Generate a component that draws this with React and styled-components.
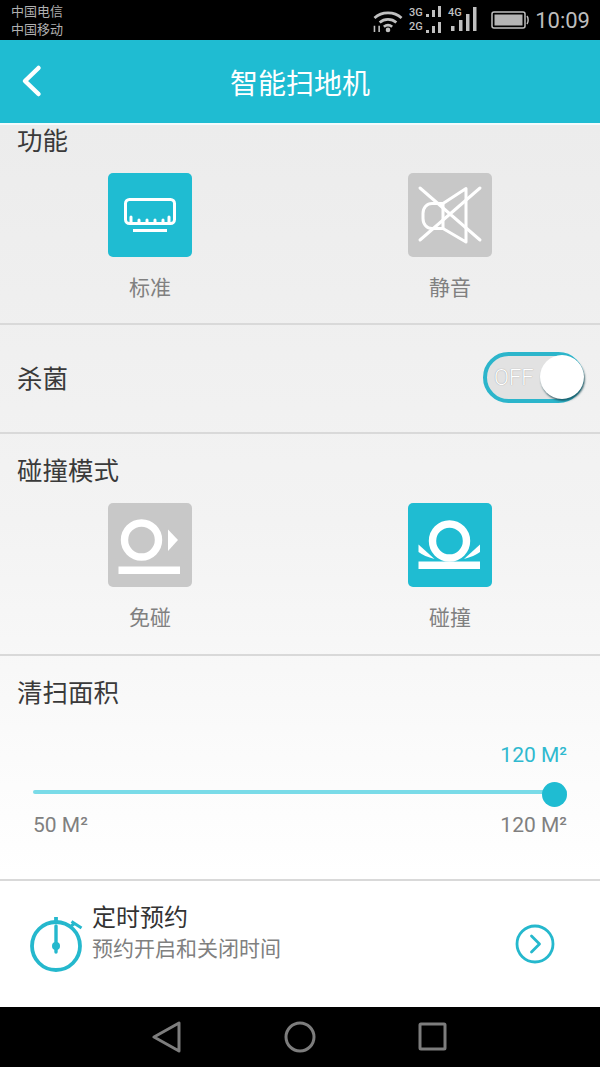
import React from 'react';
import styled, { createGlobalStyle } from 'styled-components';

const TEAL = '#1fbcd2';
const CJK = '"Roboto", "Noto Sans CJK SC", sans-serif';

const GlobalStyle = createGlobalStyle`
    html, body {
        margin: 0;
        padding: 0;
        background: #000;
    }
    body {
        font-family: ${CJK};
    }
`;

const Screen = styled.div`
    width: 600px;
    height: 1067px;
    display: flex;
    flex-direction: column;
    overflow: hidden;
    background: #000;
`;

const StatusBar = styled.div`
    height: 40px;
    flex: none;
    display: flex;
    align-items: center;
    justify-content: space-between;
    padding: 0 10px 0 11px;
    background: #000;
`;

const Carriers = styled.div`
    font-size: 13px;
    line-height: 18px;
    color: #b0b0b0;
    padding-top: 2px;
`;

const StatusRight = styled.div`
    display: flex;
    align-items: center;
`;

const Clock = styled.span`
    font-size: 22px;
    color: #bdbdbd;
    margin-left: 6px;
`;

const TitleBar = styled.div`
    height: 83px;
    flex: none;
    display: flex;
    align-items: center;
    justify-content: center;
    position: relative;
    background: ${TEAL};
    color: #fff;
    font-size: 28px;
`;

const BackIcon = styled.svg`
    position: absolute;
    left: 20px;
    top: 23px;
`;

const Body = styled.div`
    flex: 1;
    display: flex;
    flex-direction: column;
    background: linear-gradient(180deg, #ececec 0%, #f3f3f3 45%, #ffffff 85%);
    border-top: 2px solid #f4fbfc;
`;

const Section = styled.section`
    height: ${p => p.$height}px;
    flex: none;
    box-sizing: border-box;
    border-bottom: 2px solid #d9d9d9;
    padding: ${p => p.$top}px 17px 0;
`;

const SectionTitle = styled.div`
    font-size: 25.5px;
    line-height: 30px;
    color: #3a3a3a;
`;

const Choices = styled.div`
    display: grid;
    grid-template-columns: 1fr 1fr;
    margin: ${p => p.$gap}px -17px 0;
`;

const Choice = styled.div`
    display: flex;
    flex-direction: column;
    align-items: center;
`;

const Tile = styled.div`
    width: 84px;
    height: 84px;
    border-radius: 5px;
    background: ${p => (p.$active ? TEAL : '#c8c8c8')};
    svg {
        display: block;
    }
`;

const ChoiceLabel = styled.div`
    margin-top: 16px;
    font-size: 21px;
    line-height: 30px;
    color: #808080;
`;

const SwitchRow = styled(Section)`
    display: flex;
    align-items: center;
    justify-content: space-between;
    padding: 0 16px 0 17px;
`;

const Toggle = styled.div`
    width: 101px;
    height: 51px;
    margin-top: -3px;
    box-sizing: border-box;
    border: 4px solid #2cb5cb;
    border-radius: 26px;
    background: #e2e2e2;
    display: flex;
    align-items: center;
    justify-content: space-between;
    padding-left: 7px;
`;

const ToggleText = styled.span`
    font-size: 22px;
    font-weight: 300;
    color: #fff;
    text-shadow: 0 0 1px #8a8a8a;
`;

const ToggleKnob = styled.span`
    width: 44px;
    height: 44px;
    margin-right: -4px;
    border-radius: 50%;
    background: #fff;
    box-shadow: 1px 2px 2px rgba(20, 70, 80, 0.75);
`;

const SliderBlock = styled.div`
    margin: 32px 16px 0 16px;
`;

const SliderValue = styled.div`
    text-align: right;
    font-size: 21px;
    line-height: 30px;
    color: #2fb9cf;
`;

const SliderTrack = styled.div`
    position: relative;
    height: 4px;
    margin-top: 20px;
    background: #7adbe8;
    border-radius: 2px;
`;

const SliderThumb = styled.span`
    position: absolute;
    right: 0;
    top: -8px;
    width: 25px;
    height: 25px;
    border-radius: 50%;
    background: ${TEAL};
`;

const SliderLabels = styled.div`
    display: flex;
    justify-content: space-between;
    margin-top: 16px;
    font-size: 21px;
    line-height: 30px;
    color: #808080;
`;

const ScheduleRow = styled.div`
    flex: 1;
    display: flex;
    align-items: center;
    padding: 0 45px 0 26px;
`;

const ScheduleText = styled.div`
    flex: 1;
    margin: -24px 0 0 6px;
`;

const ScheduleTitle = styled.div`
    font-size: 24px;
    line-height: 34px;
    color: #333;
`;

const ScheduleSub = styled.div`
    font-size: 21px;
    line-height: 28px;
    color: #808080;
`;

const NavBar = styled.div`
    height: 60px;
    flex: none;
    display: grid;
    grid-template-columns: repeat(3, 133px);
    justify-content: center;
    justify-items: center;
    align-items: center;
    background: #000;
`;

function WifiIcon() {
    return (
        <svg width="34" height="25" viewBox="0 0 32 24" fill="none" stroke="#c0c0c0" strokeWidth="2.600">
            <path d="M3 9.500c7-6.500 19-6.500 26 0" />
            <path d="M8 14c4.500-4 11.500-4 16 0" />
            <path d="M12 18c2.500-2 5.500-2 8 0" />
            <circle cx="16" cy="21" r="2.200" fill="#c0c0c0" stroke="none" />
            <path d="M3 17v6M7.500 17v6" strokeWidth="1.500" />
        </svg>
    );
}

function SignalIcon() {
    return (
        <svg width="36" height="30" viewBox="0 0 36 30" style={{ marginLeft: 4 }}>
            <g fill="#c0c0c0" fontFamily="Roboto, sans-serif" fontSize="11" fontWeight="500">
                <text x="0" y="11">3G</text>
                <text x="0" y="25">2G</text>
                <rect x="17" y="9" width="3" height="3" />
                <rect x="23" y="5" width="3" height="7" />
                <rect x="29" y="1" width="3" height="11" />
                <rect x="17" y="25" width="3" height="3" />
                <rect x="23" y="21" width="3" height="7" />
                <rect x="29" y="17" width="3" height="11" />
            </g>
        </svg>
    );
}

function Signal4gIcon() {
    return (
        <svg width="30" height="30" viewBox="0 0 30 30" style={{ marginLeft: 3 }}>
            <g fill="#c0c0c0">
                <text x="0" y="11" fontFamily="Roboto, sans-serif" fontSize="11" fontWeight="500">4G</text>
                <rect x="3" y="21" width="3.500" height="5" />
                <rect x="11" y="15" width="3.500" height="11" />
                <rect x="18" y="9" width="3.500" height="17" />
                <rect x="25" y="2" width="3.500" height="24" />
            </g>
        </svg>
    );
}

function BatteryIcon() {
    return (
        <svg width="38" height="20" viewBox="0 0 38 20" style={{ marginLeft: 13 }}>
            <rect x="1" y="2" width="33" height="16" rx="2" fill="none" stroke="#c0c0c0" strokeWidth="1.500" />
            <rect x="3.500" y="4.500" width="28" height="11" fill="#b4b4b4" />
            <path d="M36 6c1.500 2 1.500 6 0 8" fill="none" stroke="#c0c0c0" strokeWidth="1.500" />
        </svg>
    );
}

function StandardGlyph() {
    return (
        <svg width="84" height="84" viewBox="0 0 84 84" fill="none" stroke="#fff" strokeWidth="3" strokeLinecap="round">
            <rect x="17.500" y="26.500" width="49" height="24" rx="4" />
            <path d="M23 44v5M31 47v3M39 47v3M47 47v3M55 47v3M61 44v5" />
            <path d="M25 57.500h34" strokeWidth="3" strokeLinecap="butt" />
        </svg>
    );
}

function MuteGlyph() {
    return (
        <svg width="84" height="84" viewBox="0 0 84 84" fill="none" stroke="#fff" strokeWidth="3" strokeLinecap="round" strokeLinejoin="round">
            <path d="M12 15l60 52M72 15L12 67" />
            <path d="M35 30.500H24c-5 0-9 4-9 10v5c0 6 4 10 9 10h11z" />
            <path d="M35 30.500L58 15.500v53.500L35 55.500" />
        </svg>
    );
}

function NoTouchGlyph() {
    return (
        <svg width="84" height="84" viewBox="0 0 84 84" fill="#fff">
            <circle cx="33.500" cy="37" r="17" fill="none" stroke="#fff" strokeWidth="7.400" />
            <path d="M60 26.500l10 10.500-10 11z" />
            <rect x="10.500" y="63.500" width="61.500" height="7.500" />
        </svg>
    );
}

function TouchGlyph() {
    return (
        <svg width="84" height="84" viewBox="0 0 84 84" fill="#fff">
            <circle cx="41.500" cy="38" r="17" fill="none" stroke="#fff" strokeWidth="7.400" />
            <rect x="10.500" y="58.500" width="61.500" height="7.500" />
            <path d="M10.500 41.500L26.500 56C20 54 14 52 10.500 49z" />
            <path d="M72 41.500L56 56C62.500 54 68.500 52 72 49z" />
        </svg>
    );
}

function StopwatchIcon() {
    return (
        <svg width="60" height="60" viewBox="0 0 60 60" fill="none" stroke="#25b8cd" style={{ marginTop: -2 }}>
            <circle cx="30" cy="33" r="24" strokeWidth="3.800" />
            <path d="M30 4v5" strokeWidth="3.800" />
            <path d="M30 13v26" strokeWidth="3.400" strokeLinecap="round" />
            <circle cx="30" cy="33" r="4" fill="#25b8cd" stroke="none" />
            <path d="M44 14l5-4M45.500 8.500l10 6.500" strokeWidth="3" />
        </svg>
    );
}

function ChevronCircle() {
    return (
        <svg width="40" height="40" viewBox="0 0 40 40" fill="none" stroke="#25b8cd">
            <circle cx="20" cy="20" r="18" strokeWidth="2.800" />
            <path d="M16.500 12l8 8-8 8" strokeWidth="2.800" strokeLinecap="round" strokeLinejoin="round" />
        </svg>
    );
}

export default function App() {
    return (
        <>
            <GlobalStyle />
            <Screen>
                <StatusBar>
                    <Carriers>
                        <div>中国电信</div>
                        <div>中国移动</div>
                    </Carriers>
                    <StatusRight>
                        <WifiIcon />
                        <SignalIcon />
                        <Signal4gIcon />
                        <BatteryIcon />
                        <Clock>10:09</Clock>
                    </StatusRight>
                </StatusBar>

                <TitleBar>
                    <BackIcon width="24" height="36" viewBox="0 0 24 36" fill="none" stroke="#fff" strokeWidth="4.500" strokeLinecap="round" strokeLinejoin="round">
                        <path d="M18.500 5L5 18l13.500 13" />
                    </BackIcon>
                    智能扫地机
                </TitleBar>

                <Body>
                    <Section $height={200} $top={1}>
                        <SectionTitle>功能</SectionTitle>
                        <Choices $gap={17}>
                            <Choice>
                                <Tile $active><StandardGlyph /></Tile>
                                <ChoiceLabel>标准</ChoiceLabel>
                            </Choice>
                            <Choice>
                                <Tile><MuteGlyph /></Tile>
                                <ChoiceLabel>静音</ChoiceLabel>
                            </Choice>
                        </Choices>
                    </Section>

                    <SwitchRow as="section" $height={109}>
                        <SectionTitle>杀菌</SectionTitle>
                        <Toggle>
                            <ToggleText>OFF</ToggleText>
                            <ToggleKnob />
                        </Toggle>
                    </SwitchRow>

                    <Section $height={222} $top={22}>
                        <SectionTitle>碰撞模式</SectionTitle>
                        <Choices $gap={17}>
                            <Choice>
                                <Tile><NoTouchGlyph /></Tile>
                                <ChoiceLabel>免碰</ChoiceLabel>
                            </Choice>
                            <Choice>
                                <Tile $active><TouchGlyph /></Tile>
                                <ChoiceLabel>碰撞</ChoiceLabel>
                            </Choice>
                        </Choices>
                    </Section>

                    <Section $height={225} $top={22}>
                        <SectionTitle>清扫面积</SectionTitle>
                        <SliderBlock>
                            <SliderValue>120 M²</SliderValue>
                            <SliderTrack>
                                <SliderThumb />
                            </SliderTrack>
                            <SliderLabels>
                                <span>50 M²</span>
                                <span>120 M²</span>
                            </SliderLabels>
                        </SliderBlock>
                    </Section>

                    <ScheduleRow>
                        <StopwatchIcon />
                        <ScheduleText>
                            <ScheduleTitle>定时预约</ScheduleTitle>
                            <ScheduleSub>预约开启和关闭时间</ScheduleSub>
                        </ScheduleText>
                        <ChevronCircle />
                    </ScheduleRow>
                </Body>

                <NavBar>
                    <svg width="30" height="32" viewBox="0 0 30 32" fill="none" stroke="#7d7d7d" strokeWidth="3" strokeLinejoin="round">
                        <path d="M27 2v28L2 16z" />
                    </svg>
                    <svg width="32" height="32" viewBox="0 0 32 32" fill="none" stroke="#7d7d7d" strokeWidth="3">
                        <circle cx="16" cy="16" r="14" />
                    </svg>
                    <svg width="30" height="30" viewBox="0 0 30 30" fill="none" stroke="#7d7d7d" strokeWidth="3" strokeLinejoin="round">
                        <rect x="2" y="2" width="25" height="25" rx="1" />
                    </svg>
                </NavBar>
            </Screen>
        </>
    );
}
